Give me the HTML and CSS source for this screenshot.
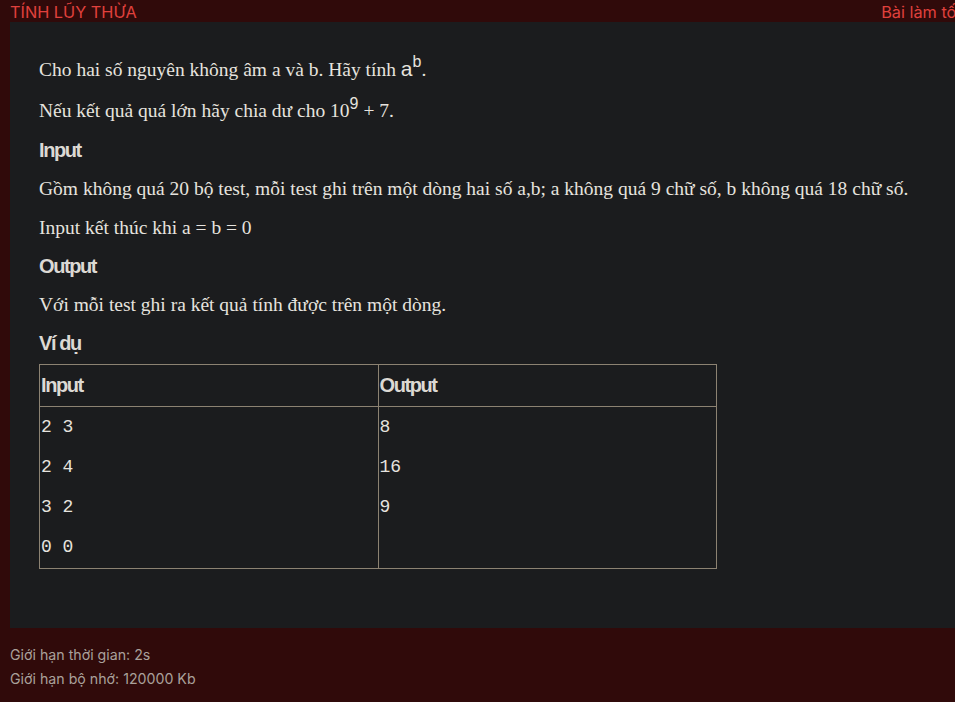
FILE: index.html
```html
<!DOCTYPE html>
<html lang="vi">
<head>
<meta charset="utf-8">
<link rel="stylesheet" href="styles.css">
</head>
<body>
<div class="page">
  <header class="topbar">
    <span class="title">TÍNH LŨY THỪA</span>
    <span class="best">Bài làm tốt nhất</span>
  </header>
  <main class="panel">
    <p class="txt txt-math">Cho hai số nguyên không âm a và b. Hãy tính <span class="math">a<sup>b</sup></span>.</p>
    <p class="txt txt-math">Nếu kết quả quá lớn hãy chia dư cho 10<sup class="msup">9</sup> + 7.</p>
    <h3 class="head">Input</h3>
    <p class="txt">Gồm không quá 20 bộ test, mỗi test ghi trên một dòng hai số a,b; a không quá 9 chữ số, b không quá 18 chữ số.</p>
    <p class="txt">Input kết thúc khi a = b = 0</p>
    <h3 class="head">Output</h3>
    <p class="txt">Với mỗi test ghi ra kết quả tính được trên một dòng.</p>
    <h3 class="head head-last">Ví dụ</h3>
    <table class="example">
      <thead>
        <tr><th>Input</th><th>Output</th></tr>
      </thead>
      <tbody>
        <tr>
          <td><div class="ln">2 3</div><div class="ln">2 4</div><div class="ln">3 2</div><div class="ln ln-last">0 0</div></td>
          <td><div class="ln">8</div><div class="ln">16</div><div class="ln">9</div></td>
        </tr>
      </tbody>
    </table>
  </main>
  <footer class="limits">
    <div class="limit">Giới hạn thời gian: 2s</div>
    <div class="limit">Giới hạn bộ nhớ: 120000 Kb</div>
  </footer>
</div>
</body>
</html>
```

FILE: styles.css
```css
html, body {
  margin: 0;
  padding: 0;
  background: #300a0a;
  overflow: hidden;
}
.page {
  width: 1000px;
  height: 702px;
  background: #300a0a;
}
.topbar {
  display: flex;
  justify-content: space-between;
  align-items: flex-end;
  height: 22px;
  padding-left: 10px;
  font-family: Inter, "Noto Sans", sans-serif;
  font-size: 16.3px;
  line-height: 20px;
  color: #e0413d;
}
.best {
  white-space: nowrap;
}
.panel {
  margin-left: 10px;
  background: #1b1c1e;
  padding: 32px 29px 59px 29px;
  color: #e6e3df;
}
.txt {
  font-family: "Liberation Serif", "Times New Roman", serif;
  font-size: 19.5px;
  line-height: 27px;
  margin: 0 0 12px;
}
.txt-math {
  line-height: 29px;
}
.math {
  font-family: "Liberation Sans", Arial, sans-serif;
  font-size: 21px;
}
.math sup {
  font-size: 16px;
  vertical-align: 9px;
  line-height: 0;
}
.msup {
  font-family: "Liberation Sans", Arial, sans-serif;
  font-size: 16px;
  vertical-align: 8px;
  line-height: 0;
}
.head {
  font-family: "Liberation Sans", Arial, sans-serif;
  font-weight: bold;
  font-size: 20px;
  letter-spacing: -1.4px;
  line-height: 26px;
  margin: 0 0 12px;
  color: #dcd9d4;
}
.head-last {
  margin-bottom: 8px;
}
.example {
  border-collapse: collapse;
  width: 678px;
  color: #e6e3df;
}
.example th, .example td {
  border: 1px solid #8c8272;
  width: 50%;
  text-align: left;
  vertical-align: top;
  padding: 0 1px;
}
.example th {
  height: 41px;
  font-family: "Liberation Sans", Arial, sans-serif;
  font-weight: bold;
  font-size: 20px;
  letter-spacing: -1.4px;
  color: #dcd9d4;
  vertical-align: middle;
}
.ln {
  font-family: "Liberation Mono", "Courier New", monospace;
  font-size: 18px;
  height: 40px;
  line-height: 40px;
}
.ln-last {
  height: 41px;
}
.limits {
  padding: 15px 10px 0;
  font-family: Inter, "Noto Sans", sans-serif;
  font-size: 14.2px;
  color: #aaa19b;
}
.limit {
  line-height: 24px;
}
```
